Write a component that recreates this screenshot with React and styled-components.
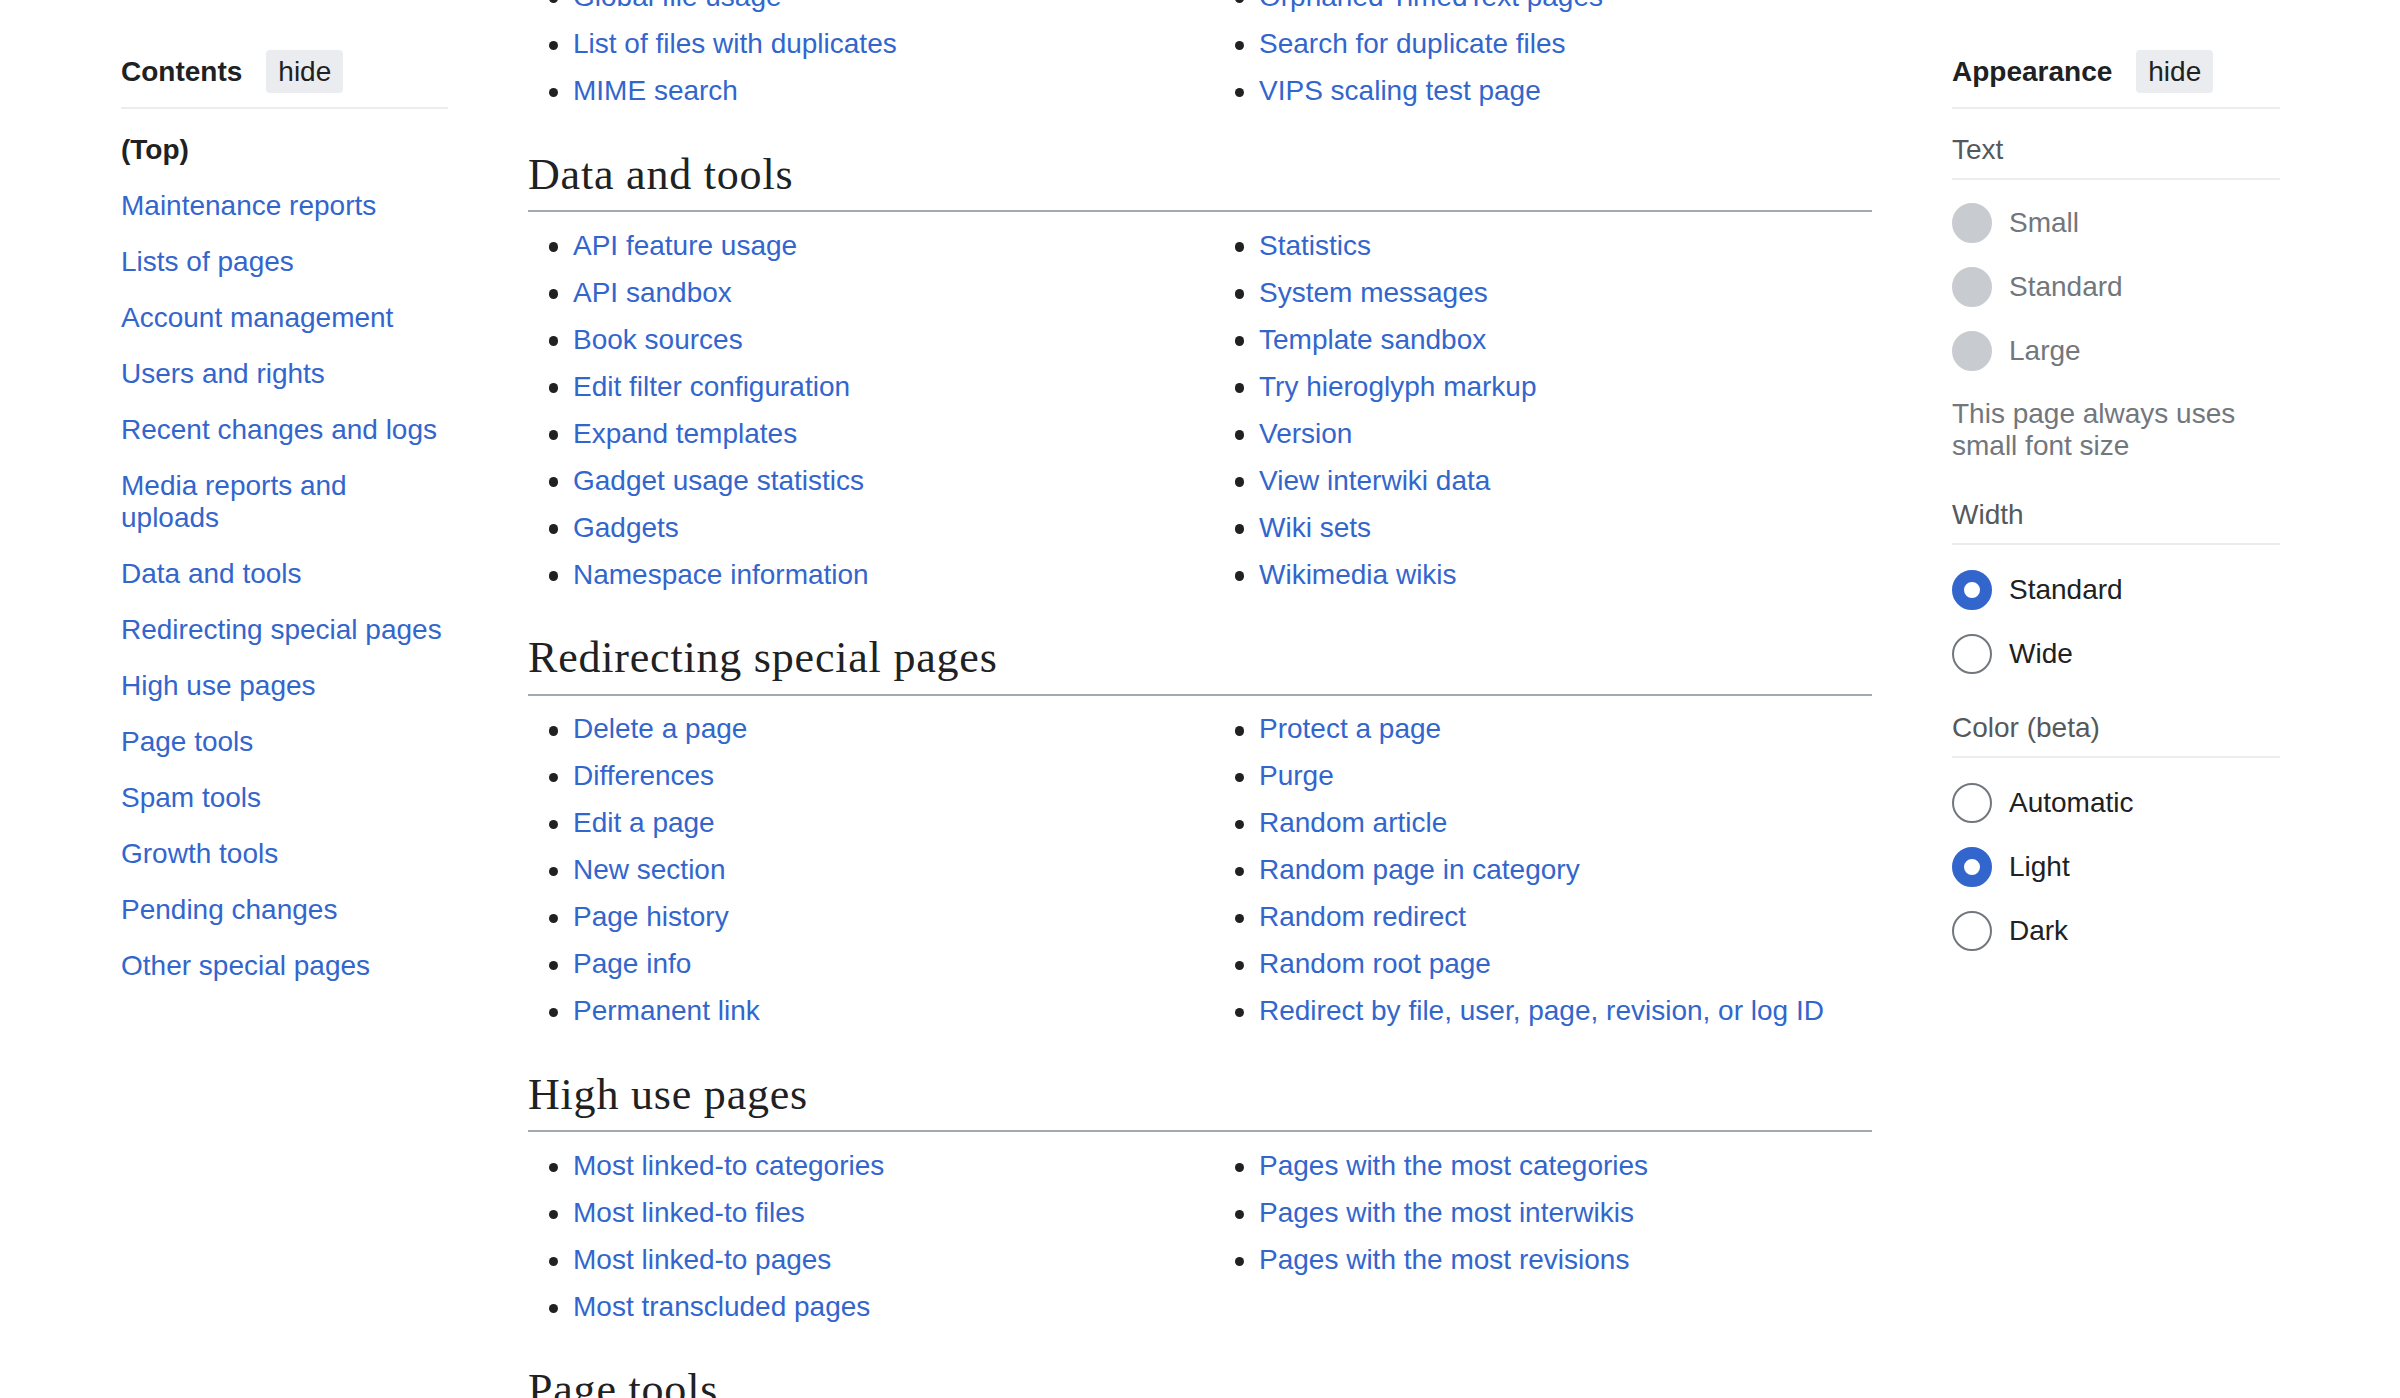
import React from 'react';
import styled, { createGlobalStyle } from 'styled-components';

const GlobalStyle = createGlobalStyle`
  html, body { margin: 0; padding: 0; background: #fff; overflow: hidden; }
  body { font-family: "Liberation Sans", Arial, sans-serif; color: #202122; font-size: 28px; }
  * { box-sizing: border-box; }
`;

const Page = styled.div`
  display: grid;
  grid-template-columns: 327px 1fr 328px;
  column-gap: 80px;
  padding: 0 120px 0 121px;
  height: 1398px;
  overflow: hidden;
  align-items: start;
`;

const Sidebar = styled.nav`
  padding-top: 50px;
  font-size: 28px;
`;

const SidebarHeader = styled.div`
  display: flex;
  align-items: center;
  gap: 24px;
  padding-bottom: 14px;
  border-bottom: 2px solid #eaecf0;
`;

const SidebarTitle = styled.div`
  font-weight: bold;
  line-height: 43px;
  color: #202122;
`;

const HideButton = styled.button`
  height: 43px;
  padding: 0 12px;
  border: 0;
  border-radius: 4px;
  background: #eaecf0;
  color: #202122;
  font-family: inherit;
  font-size: 28px;
  line-height: 1;
`;

const TocList = styled.ul`
  list-style: none;
  margin: 0;
  padding: 12.6px 0 0;
`;

const TocItem = styled.li`
  padding: 12px 0;
  line-height: 32px;
`;

const TocTop = styled.span`
  font-weight: bold;
  color: #202122;
`;

const Link = styled.a`
  color: #36c;
  text-decoration: none;
`;

const AppearanceBody = styled.div`
  padding-top: 12.6px;
`;

const Section = styled.div`
  margin-bottom: 25.5px;
`;

const SectionLabel = styled.div`
  padding: 12px 0;
  line-height: 32px;
  color: #54595d;
  border-bottom: 2px solid #eaecf0;
`;

const RadioGroup = styled.div`
  display: flex;
  flex-direction: column;
  gap: 24px;
  padding-top: ${(p) => (p.$first ? '23.5px' : '25px')};
`;

const RadioRow = styled.label`
  display: flex;
  align-items: center;
  gap: 17px;
  height: 40px;
  line-height: 32px;
  color: ${(p) => (p.$disabled ? '#72777d' : '#202122')};
`;

const RadioCircle = styled.span`
  flex: none;
  width: 40px;
  height: 40px;
  border-radius: 50%;
  background: ${(p) => (p.$disabled ? '#c8ccd1' : '#fff')};
  border: ${(p) =>
    p.$disabled ? '2px solid #c8ccd1' : p.$checked ? '12px solid #36c' : '2px solid #72777d'};
`;

const Note = styled.p`
  margin: 26.5px 0 11px;
  line-height: 32px;
  color: #72777d;
`;

const Main = styled.main`
  min-width: 0;
`;

const Scrolled = styled.div`
  margin-top: -24.8px;
`;

const Heading = styled.h2`
  font-family: "Liberation Serif", "Times New Roman", serif;
  font-weight: normal;
  font-size: 44px;
  letter-spacing: 0.8px;
  line-height: 55px;
  margin: 30.5px 0 11.7px;
  padding-bottom: 8.5px;
  border-bottom: 2px solid #a2a9b1;
  color: #202122;
`;

const LinkList = styled.ul`
  list-style: none;
  margin: 0;
  padding: 0 0 0 45px;
  display: grid;
  grid-auto-flow: column;
  grid-template-columns: 1fr 1fr;
  grid-template-rows: repeat(${(p) => p.$rows}, auto);
  column-gap: 73px;
  font-size: 28px;
`;

const ListItem = styled.li`
  position: relative;
  line-height: 44.8px;
  margin-bottom: 2.2px;
  white-space: nowrap;
  &::before {
    content: '';
    position: absolute;
    left: -24.5px;
    top: 18.6px;
    width: 9.5px;
    height: 9.5px;
    border-radius: 50%;
    background: #202122;
  }
`;

const tocItems = [
  'Maintenance reports',
  'Lists of pages',
  'Account management',
  'Users and rights',
  'Recent changes and logs',
  'Media reports and uploads',
  'Data and tools',
  'Redirecting special pages',
  'High use pages',
  'Page tools',
  'Spam tools',
  'Growth tools',
  'Pending changes',
  'Other special pages',
];

const sections = [
  {
    title: null,
    left: ['Global file usage', 'List of files with duplicates', 'MIME search'],
    right: ['Orphaned TimedText pages', 'Search for duplicate files', 'VIPS scaling test page'],
  },
  {
    title: 'Data and tools',
    left: [
      'API feature usage',
      'API sandbox',
      'Book sources',
      'Edit filter configuration',
      'Expand templates',
      'Gadget usage statistics',
      'Gadgets',
      'Namespace information',
    ],
    right: [
      'Statistics',
      'System messages',
      'Template sandbox',
      'Try hieroglyph markup',
      'Version',
      'View interwiki data',
      'Wiki sets',
      'Wikimedia wikis',
    ],
  },
  {
    title: 'Redirecting special pages',
    left: [
      'Delete a page',
      'Differences',
      'Edit a page',
      'New section',
      'Page history',
      'Page info',
      'Permanent link',
    ],
    right: [
      'Protect a page',
      'Purge',
      'Random article',
      'Random page in category',
      'Random redirect',
      'Random root page',
      'Redirect by file, user, page, revision, or log ID',
    ],
  },
  {
    title: 'High use pages',
    left: [
      'Most linked-to categories',
      'Most linked-to files',
      'Most linked-to pages',
      'Most transcluded pages',
    ],
    right: [
      'Pages with the most categories',
      'Pages with the most interwikis',
      'Pages with the most revisions',
    ],
  },
];

const appearance = [
  {
    label: 'Text',
    options: [
      { name: 'Small', disabled: true },
      { name: 'Standard', disabled: true },
      { name: 'Large', disabled: true },
    ],
    note: 'This page always uses small font size',
  },
  {
    label: 'Width',
    options: [
      { name: 'Standard', checked: true },
      { name: 'Wide' },
    ],
  },
  {
    label: 'Color (beta)',
    options: [
      { name: 'Automatic' },
      { name: 'Light', checked: true },
      { name: 'Dark' },
    ],
  },
];

function LinkSection({ section }) {
  const rows = Math.max(section.left.length, section.right.length);
  return (
    <>
      {section.title && <Heading>{section.title}</Heading>}
      <LinkList $rows={rows}>
        {section.left.map((t) => (
          <ListItem key={'l' + t}>
            <Link href="#">{t}</Link>
          </ListItem>
        ))}
        {section.left.length < rows &&
          Array.from({ length: rows - section.left.length }).map((_, i) => (
            <li key={'pad' + i} />
          ))}
        {section.right.map((t) => (
          <ListItem key={'r' + t}>
            <Link href="#">{t}</Link>
          </ListItem>
        ))}
      </LinkList>
    </>
  );
}

export default function App() {
  return (
    <>
      <GlobalStyle />
      <Page>
        <Sidebar>
          <SidebarHeader>
            <SidebarTitle>Contents</SidebarTitle>
            <HideButton>hide</HideButton>
          </SidebarHeader>
          <TocList>
            <TocItem>
              <TocTop>(Top)</TocTop>
            </TocItem>
            {tocItems.map((t) => (
              <TocItem key={t}>
                <Link href="#">{t}</Link>
              </TocItem>
            ))}
          </TocList>
        </Sidebar>

        <Main>
          <Scrolled>
            {sections.map((s, i) => (
              <LinkSection key={i} section={s} />
            ))}
            <Heading>Page tools</Heading>
          </Scrolled>
        </Main>

        <Sidebar>
          <SidebarHeader>
            <SidebarTitle>Appearance</SidebarTitle>
            <HideButton>hide</HideButton>
          </SidebarHeader>
          <AppearanceBody>
            {appearance.map((sec, i) => (
              <Section key={sec.label}>
                <SectionLabel>{sec.label}</SectionLabel>
                <RadioGroup $first={i === 0}>
                  {sec.options.map((o) => (
                    <RadioRow key={o.name} $disabled={o.disabled}>
                      <RadioCircle $disabled={o.disabled} $checked={o.checked} />
                      {o.name}
                    </RadioRow>
                  ))}
                </RadioGroup>
                {sec.note && <Note>{sec.note}</Note>}
              </Section>
            ))}
          </AppearanceBody>
        </Sidebar>
      </Page>
    </>
  );
}
